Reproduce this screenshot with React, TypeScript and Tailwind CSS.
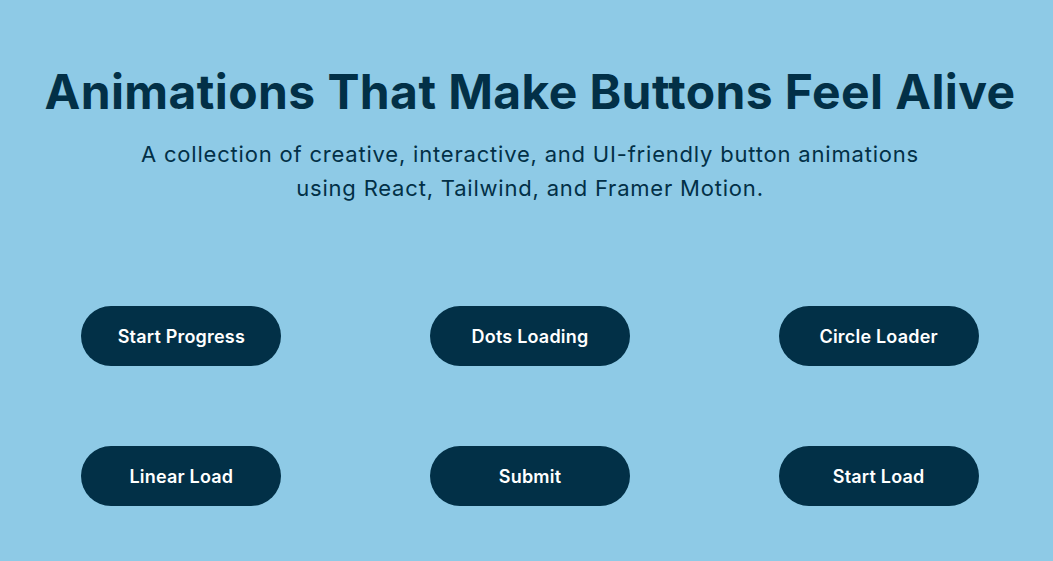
export default function App() {
  const buttons = [
    "Start Progress",
    "Dots Loading",
    "Circle Loader",
    "Linear Load",
    "Submit",
    "Start Load",
  ];
  return (
    <div
      className="min-h-[561px] w-full overflow-hidden bg-[#8ecae6] text-[#023047] pl-[7px]"
      style={{ fontFamily: "Inter, 'Open Sans', sans-serif" }}
    >
      <div className="flex flex-col items-center pt-[62px]">
        <h1 className="text-[48px] font-bold leading-[60px] tracking-[0.4px] text-center">
          Animations That Make Buttons Feel Alive
        </h1>
        <p className="mt-[15px] text-center text-[22px] leading-[34px] font-normal tracking-[0.8px]">
          A collection of creative, interactive, and UI-friendly button animations
          <br />
          using React, Tailwind, and Framer Motion.
        </p>
      </div>
      <div className="mt-[101px] grid grid-cols-3 gap-y-[80px] justify-items-center">
        {buttons.map((b) => (
          <button
            key={b}
            className="h-[60px] w-[200px] rounded-full bg-[#023047] text-white text-[18px] font-semibold tracking-[0.2px]"
          >
            {b}
          </button>
        ))}
      </div>
    </div>
  );
}
